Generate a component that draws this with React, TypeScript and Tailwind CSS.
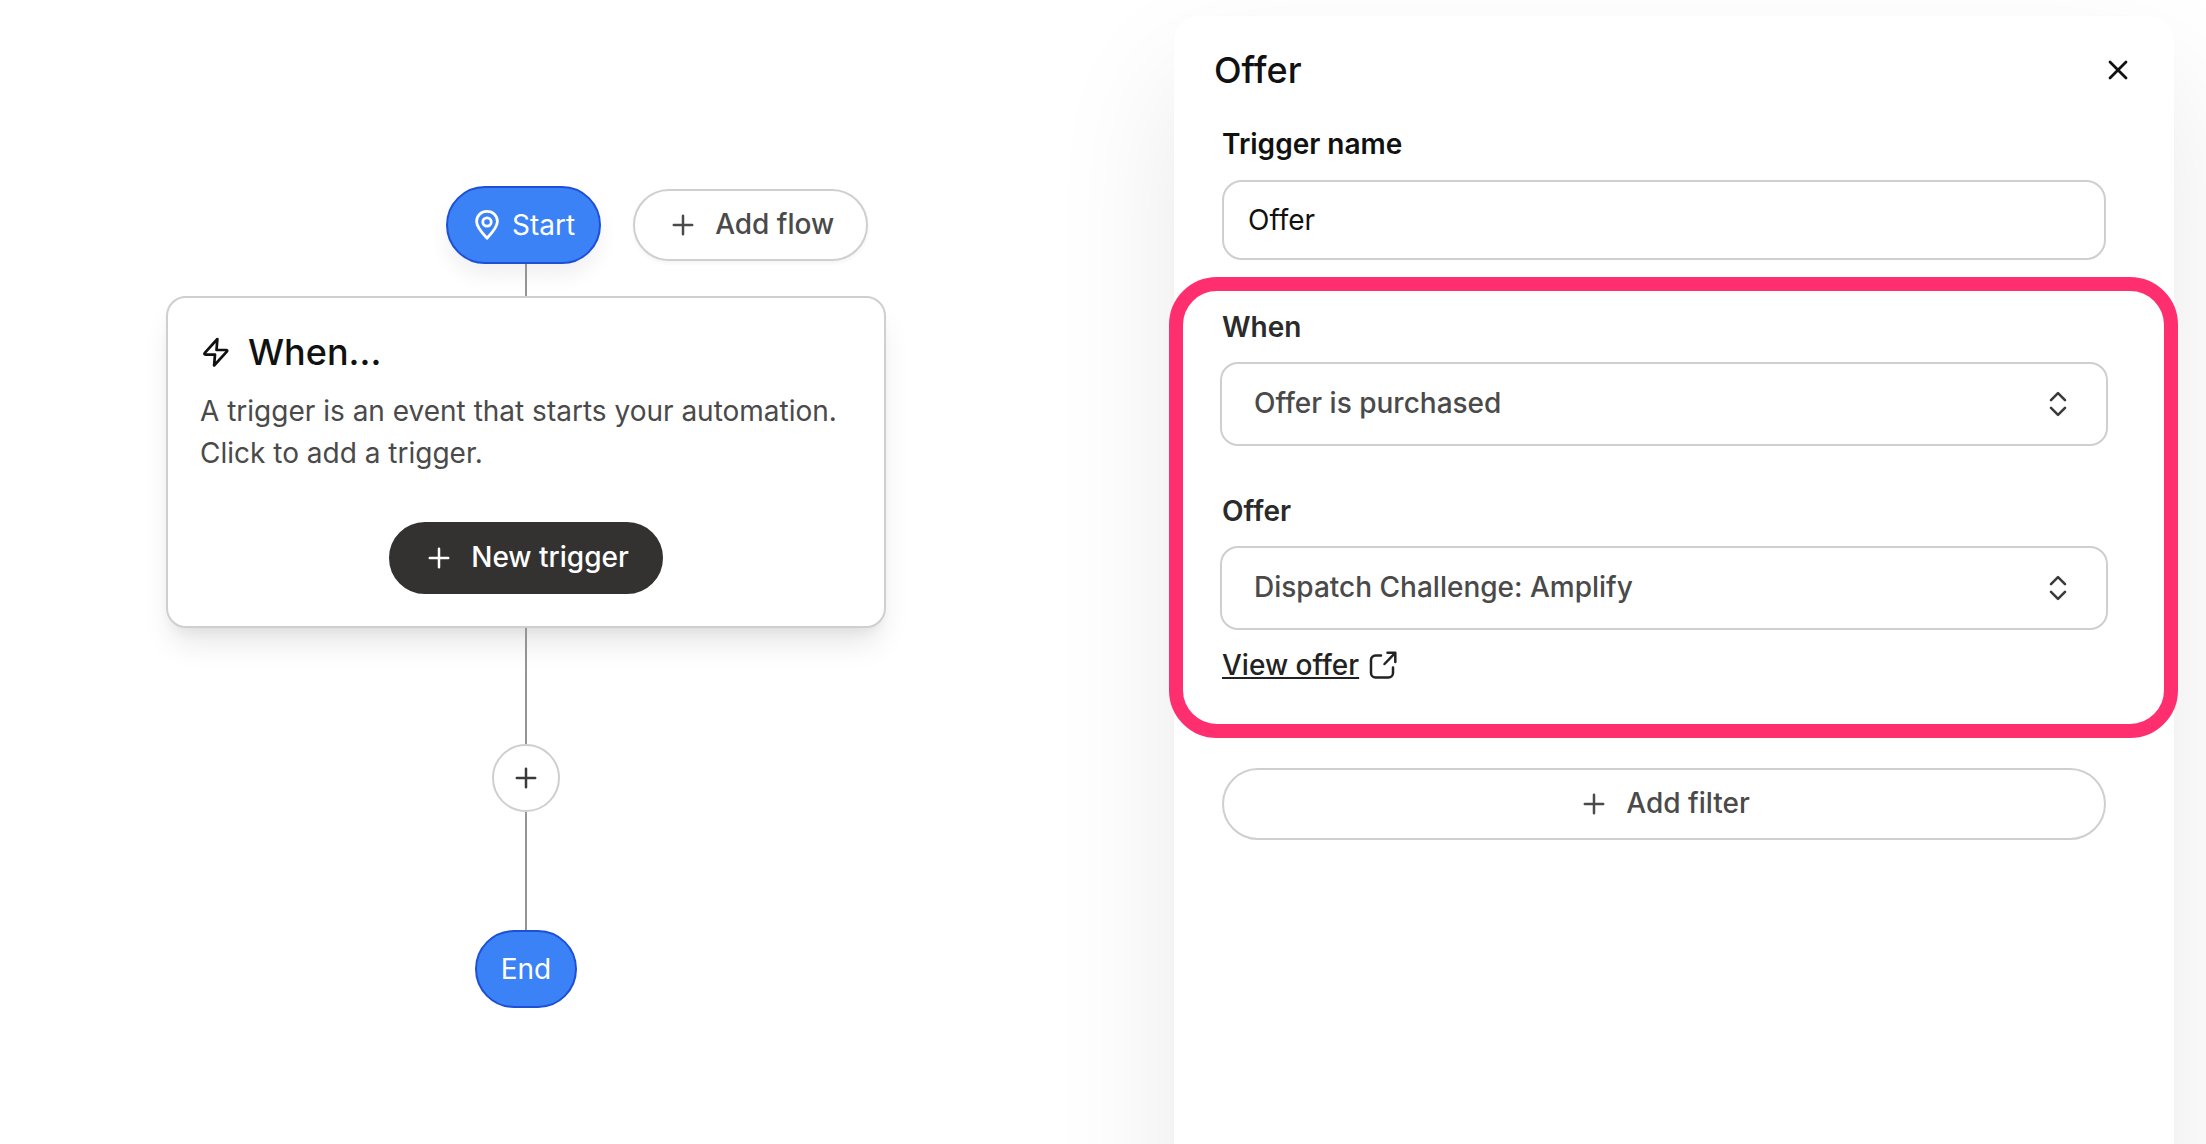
import React, { useState } from 'react';

const PlusIcon = ({ className = '' }: { className?: string }) => (
  <svg className={`w-6 h-6 shrink-0 ${className}`} viewBox="0 0 24 24" fill="none" stroke="currentColor" strokeWidth="2.5" strokeLinecap="round">
    <path d="M12 2.8v18.4M2.8 12h18.4" />
  </svg>
);

const PinIcon = () => (
  <svg className="w-[26px] h-8 shrink-0" viewBox="0 0 26 32" fill="none" stroke="currentColor" strokeWidth="2.8" strokeLinejoin="round">
    <path d="M13 29.2C9 25 2.6 18.5 2.6 12.6 2.6 6.6 7.2 2.4 13 2.4s10.4 4.2 10.4 10.2C23.4 18.5 17 25 13 29.2z" />
    <circle cx="13" cy="13" r="4.2" />
  </svg>
);

const BoltIcon = () => (
  <svg className="w-8 h-8 shrink-0" viewBox="0 0 32 32" fill="none" stroke="currentColor" strokeWidth="2.7" strokeLinecap="round" strokeLinejoin="round">
    <path d="M17.4 3 4.6 17.2c-.5.7-.1 1.4.8 1.4H15l-.9 10.9L27 15.4c.5-.7.1-1.4-.8-1.4h-9.7z" />
  </svg>
);

const CloseIcon = () => (
  <svg className="w-6 h-6" viewBox="0 0 24 24" fill="none" stroke="currentColor" strokeWidth="2.8" strokeLinecap="round">
    <path d="M4 4l16 16M20 4L4 20" />
  </svg>
);

const SelectorIcon = () => (
  <svg className="w-6 h-7" viewBox="0 0 24 28" fill="none" stroke="currentColor" strokeWidth="2.6" strokeLinecap="round" strokeLinejoin="round">
    <path d="M5 10.2l7-7 7 7M5 17.8l7 7 7-7" />
  </svg>
);

const ExternalIcon = () => (
  <svg className="w-8 h-8 shrink-0" viewBox="0 0 32 32" fill="none" stroke="currentColor" strokeWidth="2.5" strokeLinecap="round" strokeLinejoin="round">
    <path d="M14 6.500H8.5A4.5 4.5 0 0 0 4 11V24A4.500 4.500 0 0 0 8.5 28.500H21.5A4.500 4.500 0 0 0 26 24V18.500" />
    <path d="M17.500 15L28 4.200M20.500 3.800H28.300v9.200" />
  </svg>
);

const Connector = ({ className }: { className: string }) => (
  <div className={`w-[2px] bg-[#949494] ${className}`} />
);

interface SelectFieldProps {
  id: string;
  label: string;
  options: string[];
}

const SelectField = ({ id, label, options }: SelectFieldProps) => (
  <div className="flex flex-col gap-[15px]">
    <label htmlFor={id} className="pl-[2px] leading-10 font-semibold text-[#2b2b2b]">{label}</label>
    <div className="relative">
      <select
        id={id}
        className="block w-full h-[84px] pl-8 pr-20 pb-[2px] appearance-none rounded-[18px] border-2 border-[#cfcfcf] bg-white font-medium text-[#4a4a4a]"
      >
        {options.map((option) => (
          <option key={option}>{option}</option>
        ))}
      </select>
      <span className="absolute inset-y-0 right-[38px] flex items-center pointer-events-none text-[#3a3a3a]">
        <SelectorIcon />
      </span>
    </div>
  </div>
);

const Flow = () => (
  <main className="flex-1 min-w-0 pt-[186px] pl-[166px]">
    <div className="w-[720px] flex flex-col items-center">
      <div className="w-full pl-[280px] flex items-center gap-8">
        <div className="h-[78px] pl-[26px] pr-6 flex items-center gap-3 rounded-full border-2 border-[#1d4fd7] bg-[#3b82f6] text-white shadow-[0_12px_20px_rgba(0,0,0,0.06)]">
          <PinIcon />
          Start
        </div>
        <button className="h-[72px] px-8 flex items-center gap-4 rounded-full border-2 border-[#cfcfcf] bg-white font-medium text-[#4a4a4a] shadow-[0_2px_4px_rgba(0,0,0,0.05)]">
          <PlusIcon className="mx-1" />
          <span className="pb-[2px]">Add flow</span>
        </button>
      </div>

      <Connector className="h-8" />

      <section className="w-full h-[332px] px-8 pt-8 flex flex-col rounded-[20px] border-2 border-[#cfcfcf] bg-white shadow-[0_20px_30px_-6px_rgba(0,0,0,0.1),0_8px_12px_-4px_rgba(0,0,0,0.05)]">
        <h2 className="flex items-center gap-4 text-[36px] leading-[44px] font-medium text-[#111111]">
          <BoltIcon />
          When...
        </h2>
        <p className="mt-4 leading-[42px] text-[#4a4a4a]">
          A trigger is an event that starts your automation. Click to add a trigger.
        </p>
        <button className="mt-12 h-[72px] px-8 self-center flex items-center gap-4 rounded-full border-2 border-[#333231] bg-[#333231] font-medium text-white">
          <PlusIcon className="mx-1" />
          <span className="pb-[2px]">New trigger</span>
        </button>
      </section>

      <Connector className="h-[116px]" />
      <button aria-label="Add step" className="w-[68px] h-[68px] flex items-center justify-center rounded-full border-2 border-[#cfcfcf] bg-white text-[#3a3a3a]">
        <PlusIcon />
      </button>
      <Connector className="h-[118px]" />

      <div className="h-[78px] px-6 flex items-center rounded-full border-2 border-[#1d4fd7] bg-[#3b82f6] text-white">
        End
      </div>
    </div>
  </main>
);

const TriggerPanel = () => {
  const [name, setName] = useState('Offer');

  return (
    // Runs past the bottom edge so the shadow stays even all the way down
    <aside className="w-[1000px] shrink-0 mt-4 mr-8 -mb-[200px] pt-8 rounded-[24px] bg-white shadow-[0_60px_130px_rgba(0,0,0,0.09),0_0_2px_rgba(0,0,0,0.02)]">
      <header className="pl-10 pr-9 flex items-center justify-between text-[#111111]">
        <h1 className="text-[36px] leading-[44px] font-medium">Offer</h1>
        <button aria-label="Close" className="w-10 h-10 flex items-center justify-center">
          <CloseIcon />
        </button>
      </header>

      <div className="mt-8 ml-12 mr-[68px] flex flex-col gap-4">
        <label htmlFor="trigger-name" className="leading-10 font-semibold text-[#111111]">Trigger name</label>
        <input
          id="trigger-name"
          value={name}
          onChange={(e) => setName(e.target.value)}
          className="w-full h-20 px-6 rounded-[20px] border-2 border-[#cfcfcf] bg-white text-[#111111]"
        />
      </div>

      {/* Highlighted fields */}
      <section className="mt-[17px] -ml-[5px] -mr-[4px] pt-4 pb-[39px] pl-[37px] pr-14 rounded-[48px] border-[14px] border-[#ff2e6e]">
        <SelectField id="when" label="When" options={['Offer is purchased']} />
        <div className="mt-[45px]">
          <SelectField id="offer" label="Offer" options={['Dispatch Challenge: Amplify']} />
        </div>
        <a href="#offer" className="mt-[15px] pl-[2px] inline-flex items-center gap-2 leading-10 font-medium text-[#222222]">
          <span className="underline decoration-2 underline-offset-2">View offer</span>
          <ExternalIcon />
        </a>
      </section>

      <div className="mt-[30px] ml-12 mr-[68px]">
        <button className="w-full h-[72px] flex items-center justify-center gap-4 rounded-full border-2 border-[#cfcfcf] bg-white font-medium text-[#4a4a4a]">
          <PlusIcon className="mx-1" />
          <span className="pb-[2px]">Add filter</span>
        </button>
      </div>
    </aside>
  );
};

const App: React.FC = () => {
  return (
    <div className="h-screen overflow-hidden flex bg-white font-['Inter',sans-serif] text-[28px] leading-10">
      <Flow />
      <TriggerPanel />
    </div>
  );
};

export default App;
